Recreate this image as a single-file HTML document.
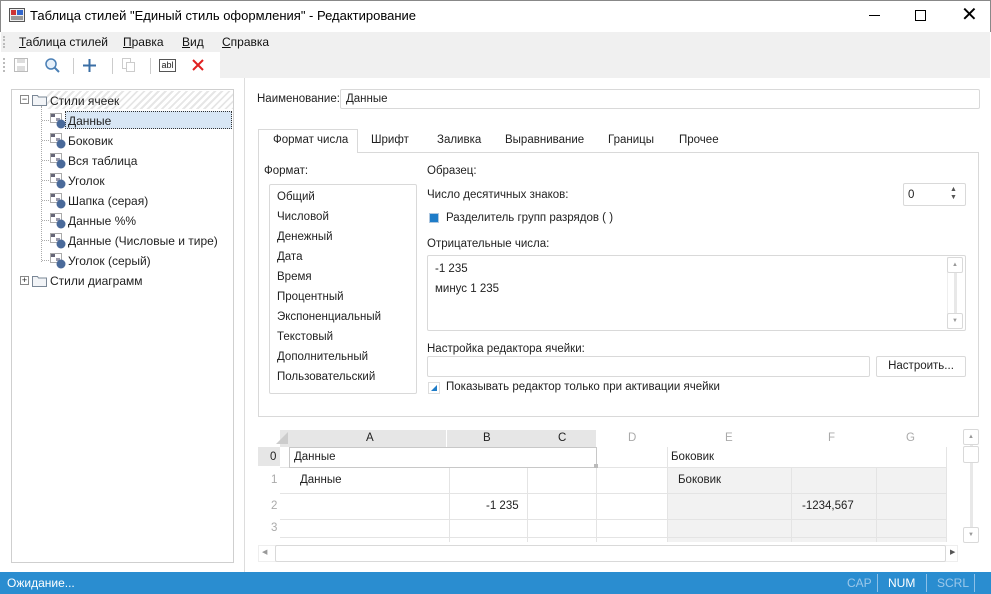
<!DOCTYPE html>
<html><head><meta charset="utf-8"><style>
*{margin:0;padding:0;box-sizing:border-box}
body{width:991px;height:594px;position:relative;overflow:hidden;background:#fff;font-family:"Liberation Sans","DejaVu Sans",sans-serif;font-size:11.5px;color:#222}
.a{position:absolute;white-space:nowrap}
.b{border:1px solid #d9d9d9;border-radius:2px;background:#fff}
</style></head><body>
<div class="a" style="left:0;top:0;width:991px;height:32px;background:#fff;border-top:1px solid #888;border-left:1px solid #888;border-right:1px solid #888"></div>
<svg class="a" style="left:9px;top:8px" width="16" height="14"><rect x="0.5" y="0.5" width="15" height="13" fill="#eee" stroke="#555"/><rect x="2" y="2" width="5" height="5" fill="#c33"/><rect x="8" y="2" width="6" height="5" fill="#36c"/><rect x="2" y="8" width="12" height="4" fill="#999"/></svg>
<div class="a" style="left:30px;top:8px;font-size:13px;color:#000">Таблица стилей "Единый стиль оформления" - Редактирование</div>
<div class="a" style="left:869px;top:15px;width:11px;height:1px;background:#000"></div>
<div class="a" style="left:915px;top:10px;width:11px;height:11px;border:1px solid #000"></div>
<div class="a" style="left:961px;top:2px;font-size:20px;color:#000">✕</div>
<div class="a" style="left:1px;top:32px;width:989px;height:20px;background:#f0f0f0"></div>
<div class="a" style="left:3px;top:36px;width:2px;height:12px;border-left:2px dotted #bbb"></div>
<div class="a" style="left:19px;top:35px;font-size:12px;color:#111"><u>Т</u>аблица стилей</div>
<div class="a" style="left:123px;top:35px;font-size:12px;color:#111"><u>П</u>равка</div>
<div class="a" style="left:182px;top:35px;font-size:12px;color:#111"><u>В</u>ид</div>
<div class="a" style="left:222px;top:35px;font-size:12px;color:#111"><u>С</u>правка</div>
<div class="a" style="left:1px;top:52px;width:989px;height:26px;background:#f0f0f0"></div>
<div class="a" style="left:1px;top:52px;width:219px;height:26px;background:#fff"></div>
<div class="a" style="left:3px;top:58px;width:2px;height:14px;border-left:2px dotted #bbb"></div>
<svg class="a" style="left:13px;top:57px" width="16" height="16"><rect x="1.5" y="1.5" width="13" height="13" fill="none" stroke="#bbb"/><rect x="4" y="2" width="8" height="4" fill="#ddd"/><rect x="4" y="9" width="8" height="5" fill="#ddd"/></svg>
<svg class="a" style="left:44px;top:57px" width="17" height="17"><circle cx="7" cy="7" r="5" fill="#e6f0fa" stroke="#4a7fb5" stroke-width="1.5"/><line x1="10.5" y1="10.5" x2="15" y2="15" stroke="#4a7fb5" stroke-width="2"/></svg>
<div class="a" style="left:73px;top:58px;width:1px;height:16px;background:#ccc"></div>
<svg class="a" style="left:82px;top:58px" width="15" height="15"><path d="M7.5 1v13M1 7.5h13" stroke="#3a6ea5" stroke-width="2"/></svg>
<div class="a" style="left:112px;top:58px;width:1px;height:16px;background:#ccc"></div>
<svg class="a" style="left:121px;top:57px" width="16" height="16"><rect x="1.5" y="1.5" width="8" height="10" fill="#fff" stroke="#ccc"/><rect x="5.5" y="5.5" width="8" height="9" fill="#fff" stroke="#ccc"/></svg>
<div class="a" style="left:150px;top:58px;width:1px;height:16px;background:#ccc"></div>
<div class="a" style="left:159px;top:59px;width:17px;height:13px;border:1px solid #555;font-size:9px;line-height:11px;text-align:center;color:#222">abl</div>
<svg class="a" style="left:192px;top:59px" width="12" height="12"><path d="M1 1L11 11M11 1L1 11" stroke="#e02020" stroke-width="2"/></svg>
<div class="a" style="left:11px;top:89px;width:223px;height:474px;border:1px solid #cfcfcf;background:#fff"></div>
<div class="a" style="left:244px;top:78px;width:1px;height:494px;background:#ddd"></div>
<div class="a" style="left:47px;top:91px;width:186px;height:18px;background:repeating-linear-gradient(135deg,#fff 0 3px,#e6e6e6 3px 5px)"></div>
<div class="a" style="left:20px;top:95px;width:9px;height:9px;border:1px solid #888;background:#fff;font-size:9px;line-height:7px;text-align:center">−</div>
<svg class="a" style="left:32px;top:94px" width="15" height="12"><path d="M0.5 1.5h5l1 1.5h8v8.5h-14z" fill="#f2f4f7" stroke="#7a8796"/></svg>
<div class="a" style="left:50px;top:94px;font-size:12px">Стили ячеек</div>
<div class="a" style="left:41px;top:106px;width:1px;height:156px;border-left:1px dotted #aaa"></div>
<div class="a" style="left:65px;top:111px;width:167px;height:18px;background:#d8e6f4;border:1px dotted #333"></div>
<div id="tree"></div>
<div class="a" style="left:20px;top:276px;width:9px;height:9px;border:1px solid #888;background:#fff;font-size:9px;line-height:7px;text-align:center">+</div>
<svg class="a" style="left:32px;top:275px" width="15" height="12"><path d="M0.5 1.5h5l1 1.5h8v8.5h-14z" fill="#f2f4f7" stroke="#7a8796"/></svg>
<div class="a" style="left:50px;top:274px;font-size:12px">Стили диаграмм</div>
<div class="a" style="left:257px;top:93px">Наименование:</div>
<div class="a b" style="left:340px;top:89px;width:640px;height:20px"></div>
<div class="a" style="left:346px;top:93px">Данные</div>
<div class="a" style="left:258px;top:152px;width:721px;height:265px;border:1px solid #d9d9d9"></div>
<div class="a" style="left:258px;top:129px;width:100px;height:24px;border:1px solid #d9d9d9;border-bottom:none;background:#fff"></div>
<div class="a" style="left:273px;top:134px">Формат числа</div>
<div class="a" style="left:371px;top:134px">Шрифт</div>
<div class="a" style="left:437px;top:134px">Заливка</div>
<div class="a" style="left:505px;top:134px">Выравнивание</div>
<div class="a" style="left:608px;top:134px">Границы</div>
<div class="a" style="left:679px;top:134px">Прочее</div>
<div class="a" style="left:264px;top:165px">Формат:</div>
<div class="a b" style="left:269px;top:184px;width:148px;height:210px"></div>
<div class="a" style="left:277px;top:187px;line-height:20px;white-space:normal">Общий<br>Числовой<br>Денежный<br>Дата<br>Время<br>Процентный<br>Экспоненциальный<br>Текстовый<br>Дополнительный<br>Пользовательский</div>
<div class="a" style="left:427px;top:165px">Образец:</div>
<div class="a" style="left:427px;top:189px">Число десятичных знаков:</div>
<div class="a b" style="left:903px;top:183px;width:63px;height:23px"></div>
<div class="a" style="left:908px;top:189px">0</div>
<div class="a" style="left:950px;top:186px;font-size:7px;line-height:8px;color:#555">▲<br>▼</div>
<div class="a" style="left:429px;top:213px;width:10px;height:10px;background:#1e7cc8;border:1px solid #b0c8e0"></div>
<div class="a" style="left:446px;top:212px">Разделитель групп разрядов ( )</div>
<div class="a" style="left:427px;top:238px">Отрицательные числа:</div>
<div class="a b" style="left:427px;top:255px;width:539px;height:76px"></div>
<div class="a" style="left:435px;top:263px">-1 235</div>
<div class="a" style="left:435px;top:283px">минус 1 235</div>
<div class="a" style="left:947px;top:257px;width:16px;height:72px;border-left:1px solid #eee"></div>
<div class="a b" style="left:947px;top:257px;width:16px;height:16px;font-size:6px;text-align:center;line-height:14px;color:#999">▲</div>
<div class="a" style="left:954px;top:273px;width:3px;height:40px;background:#e8e8e8"></div>
<div class="a b" style="left:947px;top:313px;width:16px;height:16px;font-size:6px;text-align:center;line-height:14px;color:#999">▼</div>
<div class="a" style="left:427px;top:343px">Настройка редактора ячейки:</div>
<div class="a b" style="left:427px;top:356px;width:443px;height:21px"></div>
<div class="a b" style="left:876px;top:356px;width:90px;height:21px;text-align:center;line-height:19px">Настроить...</div>
<svg class="a" style="left:428px;top:382px" width="12" height="12"><rect x="0.5" y="0.5" width="11" height="11" fill="#fff" stroke="#ddd"/><path d="M3 9L9 3V9Z" fill="#1e7cc8"/></svg>
<div class="a" style="left:446px;top:381px">Показывать редактор только при активации ячейки</div>
<div class="a" style="left:280px;top:430px;width:166px;height:17px;background:#e6e6e6"></div>
<div class="a" style="left:447px;top:430px;width:149px;height:17px;background:#e6e6e6"></div>
<svg class="a" style="left:276px;top:432px" width="12" height="12"><path d="M12 0V12H0Z" fill="#ccc"/></svg>
<div class="a" style="left:258px;top:447px;width:22px;height:19px;background:#e6e6e6"></div>
<div class="a" style="left:366px;top:432px">A</div>
<div class="a" style="left:483px;top:432px">B</div>
<div class="a" style="left:558px;top:432px">C</div>
<div class="a" style="left:628px;top:432px;color:#aaa">D</div>
<div class="a" style="left:725px;top:432px;color:#aaa">E</div>
<div class="a" style="left:828px;top:432px;color:#aaa">F</div>
<div class="a" style="left:906px;top:432px;color:#aaa">G</div>
<div class="a" style="left:667px;top:467px;width:279px;height:75px;background:#f2f2f2"></div>
<div class="a" style="left:280px;top:467px;width:666px;height:1px;background:#e4e4e4"></div>
<div class="a" style="left:280px;top:493px;width:666px;height:1px;background:#e4e4e4"></div>
<div class="a" style="left:280px;top:519px;width:666px;height:1px;background:#e4e4e4"></div>
<div class="a" style="left:280px;top:537px;width:666px;height:1px;background:#e4e4e4"></div>
<div class="a" style="left:449px;top:467px;width:1px;height:75px;background:#e4e4e4"></div>
<div class="a" style="left:527px;top:467px;width:1px;height:75px;background:#e4e4e4"></div>
<div class="a" style="left:596px;top:467px;width:1px;height:75px;background:#e4e4e4"></div>
<div class="a" style="left:667px;top:447px;width:1px;height:95px;background:#e4e4e4"></div>
<div class="a" style="left:791px;top:467px;width:1px;height:75px;background:#e4e4e4"></div>
<div class="a" style="left:876px;top:467px;width:1px;height:75px;background:#e4e4e4"></div>
<div class="a" style="left:946px;top:447px;width:1px;height:95px;background:#e4e4e4"></div>
<div class="a" style="left:289px;top:447px;width:308px;height:21px;border:1.5px solid #c8c8c8"></div>
<div class="a" style="left:594px;top:464px;width:4px;height:4px;background:#bbb"></div>
<div class="a" style="left:270px;top:451px">0</div>
<div class="a" style="left:271px;top:474px;color:#aaa">1</div>
<div class="a" style="left:271px;top:500px;color:#aaa">2</div>
<div class="a" style="left:271px;top:522px;color:#aaa">3</div>
<div class="a" style="left:294px;top:451px">Данные</div>
<div class="a" style="left:300px;top:474px">Данные</div>
<div class="a" style="left:486px;top:500px">-1 235</div>
<div class="a" style="left:671px;top:451px">Боковик</div>
<div class="a" style="left:678px;top:474px">Боковик</div>
<div class="a" style="left:802px;top:500px">-1234,567</div>
<div class="a b" style="left:963px;top:429px;width:16px;height:16px;font-size:6px;text-align:center;line-height:14px;color:#999">▲</div>
<div class="a" style="left:970px;top:445px;width:3px;height:84px;background:#e8e8e8"></div>
<div class="a b" style="left:963px;top:446px;width:16px;height:17px"></div>
<div class="a b" style="left:963px;top:527px;width:16px;height:16px;font-size:6px;text-align:center;line-height:14px;color:#999">▼</div>
<div class="a" style="left:258px;top:545px;width:700px;height:17px;border:1px solid #eee"></div>
<div class="a b" style="left:275px;top:545px;width:671px;height:17px"></div>
<div class="a" style="left:262px;top:548px;font-size:7px;color:#999">◀</div>
<div class="a" style="left:950px;top:548px;font-size:7px;color:#555">▶</div>
<div class="a" style="left:0;top:572px;width:991px;height:22px;background:#2a8dd0"></div>
<div class="a" style="left:7px;top:576px;color:#fff;font-size:12px">Ожидание...</div>
<div class="a" style="left:847px;top:576px;color:#9cc8ea;font-size:12px">CAP</div>
<div class="a" style="left:877px;top:574px;width:1px;height:18px;background:#8dc0e8"></div>
<div class="a" style="left:888px;top:576px;color:#fff;font-size:12px">NUM</div>
<div class="a" style="left:926px;top:574px;width:1px;height:18px;background:#8dc0e8"></div>
<div class="a" style="left:937px;top:576px;color:#9cc8ea;font-size:12px">SCRL</div>
<div class="a" style="left:974px;top:574px;width:1px;height:18px;background:#8dc0e8"></div>
<script>
var items=["Данные","Боковик","Вся таблица","Уголок","Шапка (серая)","Данные %%","Данные (Числовые и тире)","Уголок (серый)"];
var h="";
items.forEach(function(t,i){var y=114+i*20;
h+='<div class="a" style="left:42px;top:'+(y+6)+'px;width:7px;height:1px;border-top:1px dotted #aaa"></div>';
h+='<svg class="a" style="left:50px;top:'+(y-1)+'px" width="16" height="16"><rect x="0.5" y="0.5" width="11" height="9" fill="#fff" stroke="#aaa"/><rect x="1" y="1" width="4" height="3" fill="#667"/><rect x="6" y="5" width="4" height="3" fill="#99a"/><circle cx="11" cy="11" r="4.5" fill="#4a6a9a"/></svg>';
h+='<div class="a" style="left:68px;top:'+y+'px;font-size:12px">'+t+'</div>';});
document.getElementById("tree").innerHTML=h;
</script>
</body></html>
